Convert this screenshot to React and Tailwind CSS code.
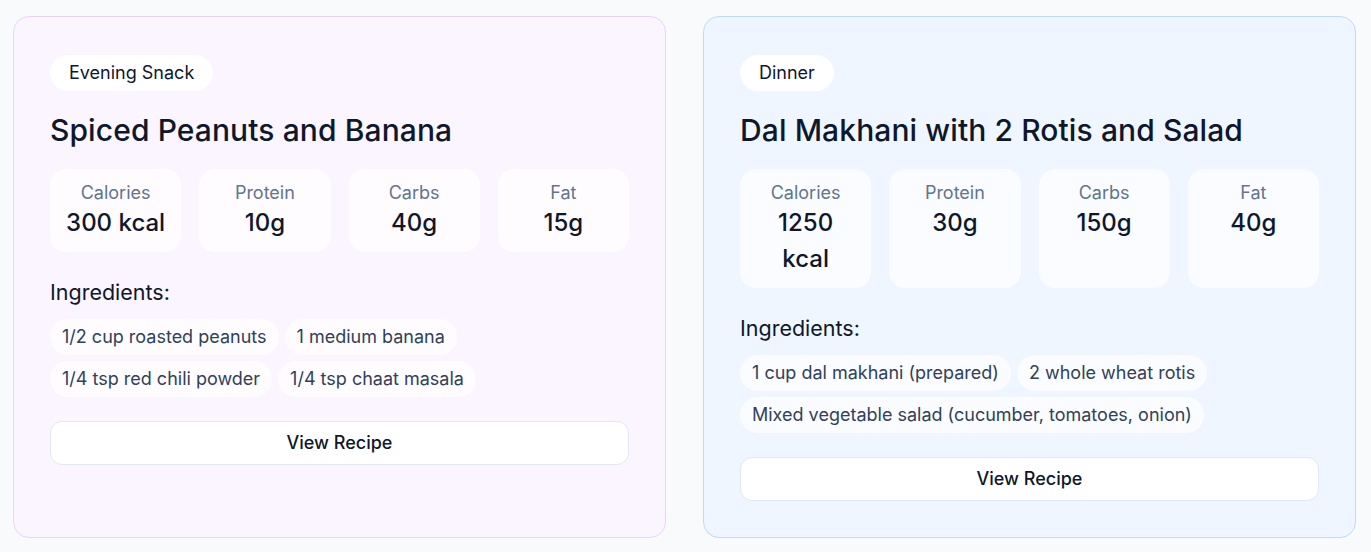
import React from 'react'

const meals = [
  {
    type: 'Evening Snack',
    name: 'Spiced Peanuts and Banana',
    calories: '300 kcal',
    protein: '10g',
    carbs: '40g',
    fat: '15g',
    ingredients: ['1/2 cup roasted peanuts', '1 medium banana', '1/4 tsp red chili powder', '1/4 tsp chaat masala'],
    card: 'bg-purple-50 border-purple-200',
  },
  {
    type: 'Dinner',
    name: 'Dal Makhani with 2 Rotis and Salad',
    calories: '1250 kcal',
    protein: '30g',
    carbs: '150g',
    fat: '40g',
    ingredients: ['1 cup dal makhani (prepared)', '2 whole wheat rotis', 'Mixed vegetable salad (cucumber, tomatoes, onion)'],
    card: 'bg-blue-50 border-blue-200',
  },
]

function Stat({ label, value }) {
  return (
    <div className="rounded-2xl bg-white/70 px-3 pt-3 pb-[11px] text-center">
      <div className="text-[18px] leading-[24px] text-slate-500">{label}</div>
      <div className="text-[24px] leading-[36px] font-medium text-slate-900">{value}</div>
    </div>
  )
}

function MealCard({ meal }) {
  return (
    <div className={`rounded-2xl border px-9 pt-[38px] pb-9 ${meal.card}`}>
      <span className="inline-block rounded-full bg-white px-[19px] py-1.5 text-[18px] leading-[24px] text-slate-900">{meal.type}</span>
      <h2 className="mt-[21px] text-[30px] leading-[36px] font-medium tracking-[0.1px] text-slate-900">{meal.name}</h2>
      <div className="mt-[21px] grid grid-cols-4 gap-[18px]">
        <Stat label="Calories" value={meal.calories} />
        <Stat label="Protein" value={meal.protein} />
        <Stat label="Carbs" value={meal.carbs} />
        <Stat label="Fat" value={meal.fat} />
      </div>
      <h3 className="mt-[26px] text-[21.5px] leading-[28px] text-slate-900">Ingredients:</h3>
      <div className="mt-[13px] flex flex-wrap gap-1.5">
        {meal.ingredients.map(i => (
          <span key={i} className="rounded-full bg-white/70 px-3 py-1.5 text-[18px] leading-[24px] text-slate-700">{i}</span>
        ))}
      </div>
      <button className="mt-6 w-full rounded-xl border border-slate-200 bg-white py-[9px] text-[18px] leading-[24px] font-medium text-slate-900">
        View Recipe
      </button>
    </div>
  )
}

export default function App() {
  return (
    <div className="min-h-screen bg-slate-50 px-[13px] pt-4 pb-4" style={{ fontFamily: 'Inter, "Noto Sans", sans-serif' }}>
      <div className="grid grid-cols-2 gap-[37px] w-[1343px]">
        {meals.map(m => <MealCard key={m.name} meal={m} />)}
      </div>
    </div>
  )
}
